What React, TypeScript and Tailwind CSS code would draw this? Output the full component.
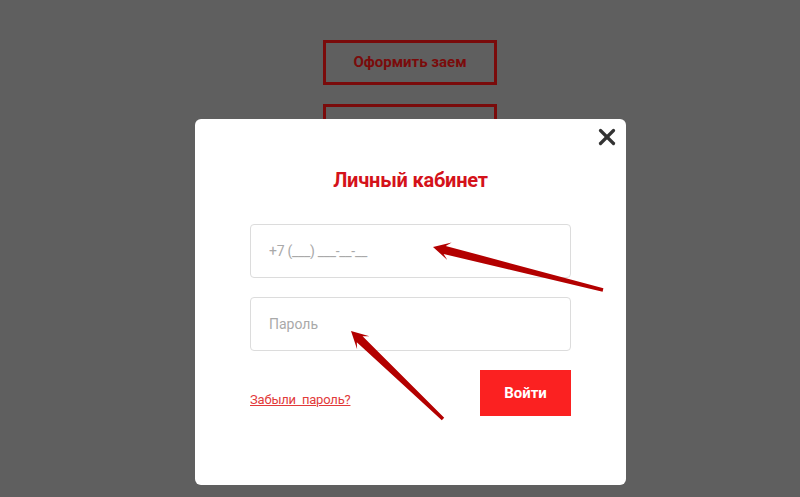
import { X } from 'lucide-react';

type Pt = [number, number];

// tapered annotation arrow from tail to tip
function arrowPoints(tip: Pt, tail: Pt) {
  const dx = tip[0] - tail[0];
  const dy = tip[1] - tail[1];
  const len = Math.hypot(dx, dy);
  const ux = dx / len;
  const uy = dy / len;
  const nx = -uy;
  const ny = ux;
  const at = (d: number, w: number): string =>
    `${(tip[0] - ux * d + nx * w).toFixed(1)},${(tip[1] - uy * d + ny * w).toFixed(1)}`;
  return [
    at(len, 1.8),
    at(12, 4.2),
    at(17, 9),
    at(0, 0),
    at(17, -9),
    at(12, -4.2),
    at(len, -1.8),
  ].join(' ');
}

export default function App() {
  return (
    <div className="relative h-[497px] w-full overflow-hidden bg-[#5f5f5f] font-['Roboto',sans-serif]">
      <div className="flex flex-col items-center gap-[19px] pl-[20px] pt-[40px]">
        <button className="flex h-[45px] w-[174px] items-center justify-center border-[3px] border-[#7a0b0b] text-[15px] font-bold text-[#7a0b0b]">
          Оформить заем
        </button>
        <button className="h-[45px] w-[174px] border-[3px] border-[#7a0b0b]" />
      </div>

      <div className="absolute left-[195px] top-[119px] h-[366px] w-[431px] rounded-[6px] bg-white px-[55px]">
        <button className="absolute right-[6px] top-[5px] text-[#333]">
          <X className="h-[26px] w-[26px]" strokeWidth={3} />
        </button>
        <h2 className="pt-[49px] text-center text-[20px] font-bold leading-[24px] tracking-[-0.2px] text-[#d4121a]">
          Личный кабинет
        </h2>
        <div className="mt-[32px] flex flex-col gap-[19px]">
          <input
            className="h-[54px] w-full rounded-[4px] border border-[#dcdcdc] px-[18px] text-[14px] tracking-[-0.3px] text-[#333] outline-none placeholder:text-[#a9a9a9]"
            placeholder="+7 (___) ___-__-__"
          />
          <input
            type="password"
            className="h-[54px] w-full rounded-[4px] border border-[#dcdcdc] px-[18px] text-[14px] text-[#333] outline-none placeholder:text-[#a9a9a9]"
            placeholder="Пароль"
          />
        </div>
        <div className="mt-[19px] flex justify-between">
          <a href="#" className="self-end pb-[8px] text-[13px] leading-[17px] tracking-[-0.2px] text-[#e23a3a] underline">
            Забыли&nbsp; пароль?
          </a>
          <button className="h-[46px] w-[91px] bg-[#fb2121] text-[15px] font-bold text-white">
            Войти
          </button>
        </div>
      </div>

      <svg className="pointer-events-none absolute inset-0" width="800" height="497" viewBox="0 0 800 497">
        <polygon points={arrowPoints([433, 247], [603, 290])} fill="#b30000" />
        <polygon points={arrowPoints([351, 331], [443, 419])} fill="#b30000" />
      </svg>
    </div>
  );
}
